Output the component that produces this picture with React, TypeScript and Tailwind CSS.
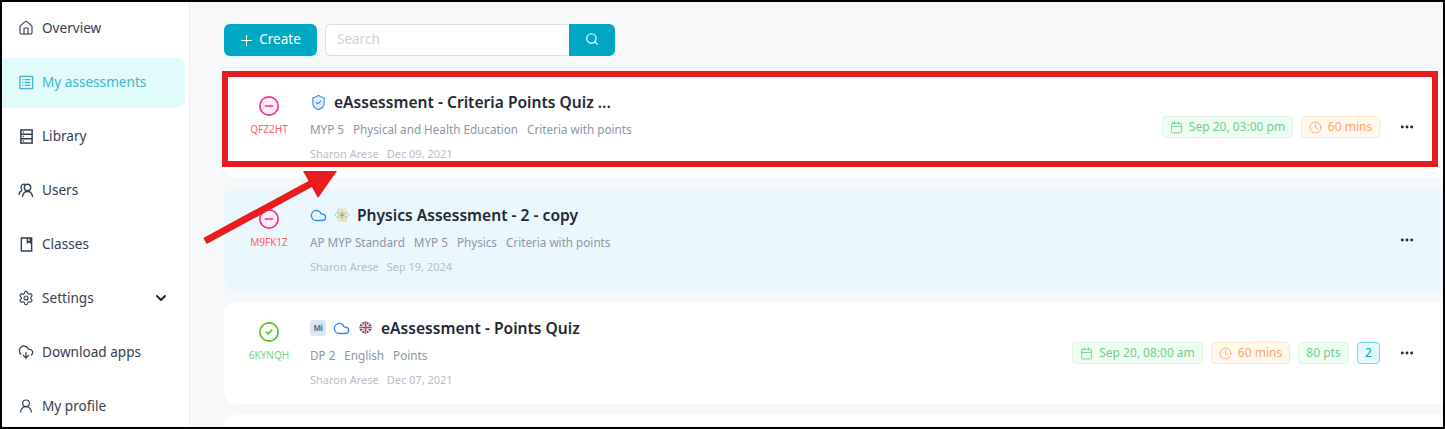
import { CloudDownload, Settings, UserRound, House, ChevronDown, Plus, Search, ShieldCheck, Cloud, Calendar, Clock, Ellipsis, CircleMinus, CircleCheck } from "lucide-react";

const AssessmentIcon = () => (
	<svg viewBox="0 0 16 16" className="h-[15px] w-[15px]" fill="none" stroke="currentColor" strokeWidth={1.4}>
		<rect x="1" y="1.5" width="13.5" height="13" />
		<path d="M3.5 5h1.2M6 5h6M3.5 8h1.2M6 8h6M3.5 11h1.2M6 11h6" />
	</svg>
);

const LibraryIcon = () => (
	<svg viewBox="0 0 16 16" className="h-[15px] w-[15px]" fill="none" stroke="currentColor" strokeWidth={1.6}>
		<rect x="2" y="1" width="12" height="14" />
		<path d="M2 5.7h12M2 10.3h12M4 3.4h1.2M4 8h1.2M4 12.7h1.2" />
	</svg>
);

const UsersIcon = () => (
	<svg viewBox="0 0 16 16" className="h-4 w-4" fill="none" stroke="currentColor" strokeWidth={1.4} strokeLinecap="round">
		<circle cx="9.5" cy="5.5" r="3.2" />
		<path d="M4.5 14.5c.4-3 2.4-5 5-5s4.6 2 5 5" />
		<path d="M6.5 2.2A3.2 3.2 0 0 0 3.8 7.6 M3.6 8.6C2.2 9.4 1.3 10.8 1 12.6" />
	</svg>
);

const ClassesIcon = () => (
	<svg viewBox="0 0 16 16" className="h-[15px] w-[15px]" fill="none" stroke="currentColor" strokeWidth={1.5}>
		<path d="M2.5 1h11v14h-11z" />
		<path d="M9 1v5l1.5-1 1.5 1V1" />
	</svg>
);

const AtomIcon = () => (
	<svg viewBox="0 0 16 16" className="h-4 w-4" fill="none" strokeWidth={0.8}>
		<ellipse cx="8" cy="8" rx="7" ry="3" stroke="#8fc7e8" />
		<ellipse cx="8" cy="8" rx="7" ry="3" stroke="#f0a58f" transform="rotate(60 8 8)" />
		<ellipse cx="8" cy="8" rx="7" ry="3" stroke="#e8cf7a" transform="rotate(120 8 8)" />
		<circle cx="8" cy="8" r="2" fill="#8cc63f" />
	</svg>
);

const FlagIcon = () => (
	<svg viewBox="0 0 14 14" className="ml-[2px] mr-[2px] h-[13px] w-[13px] -translate-y-px">
		<circle cx="7" cy="7" r="6.5" fill="#3f4f9a" />
		<path d="M2.5 2.5l9 9M11.5 2.5l-9 9" stroke="#f2f2f7" strokeWidth={1.6} />
		<path d="M7 .5v13M.5 7h13" stroke="#f2f2f7" strokeWidth={3} />
		<path d="M7 .5v13M.5 7h13" stroke="#d8344a" strokeWidth={1.6} />
	</svg>
);

const MiBadge = () => (
	<span className="flex h-4 w-4 items-center justify-center rounded-[3px] bg-[#dbe6f4] text-[8px] font-bold tracking-tighter text-[#5a6b80]">Mi</span>
);

const navItems = [
	{ label: "Overview", icon: <House className="h-4 w-4" strokeWidth={1.7} /> },
	{ label: "My assessments", icon: <AssessmentIcon />, active: true },
	{ label: "Library", icon: <LibraryIcon /> },
	{ label: "Users", icon: <UsersIcon /> },
	{ label: "Classes", icon: <ClassesIcon /> },
	{ label: "Settings", icon: <Settings className="h-4 w-4" strokeWidth={1.7} />, chevron: true },
	{ label: "Download apps", icon: <CloudDownload className="h-4 w-4" strokeWidth={1.9} /> },
	{ label: "My profile", icon: <UserRound className="h-4 w-4" strokeWidth={1.8} /> },
];

const cloud = <Cloud key="c" className="h-[17px] w-[17px] text-[#2f86f5]" strokeWidth={1.9} />;

const cards = [
	{
		done: false,
		code: "QFZ2HT",
		icons: [<ShieldCheck key="s" className="h-[17px] w-[17px] fill-[#e3effd] text-[#3d8bf2]" strokeWidth={1.6} />],
		title: "eAssessment - Criteria Points Quiz ...",
		meta: ["MYP 5", "Physical and Health Education", "Criteria with points"],
		date: "Dec 09, 2021",
		when: "Sep 20, 03:00 pm",
		mins: "60 mins",
	},
	{
		done: false,
		tinted: true,
		code: "M9FK1Z",
		icons: [cloud, <AtomIcon key="a" />],
		title: "Physics Assessment - 2 - copy",
		meta: ["AP MYP Standard", "MYP 5", "Physics", "Criteria with points"],
		date: "Sep 19, 2024",
	},
	{
		done: true,
		code: "6KYNQH",
		icons: [<MiBadge key="m" />, cloud, <FlagIcon key="f" />],
		title: "eAssessment - Points Quiz",
		meta: ["DP 2", "English", "Points"],
		date: "Dec 07, 2021",
		when: "Sep 20, 08:00 am",
		mins: "60 mins",
		pts: "80 pts",
		count: "2",
	},
];

function Card({ card }: { card: (typeof cards)[number] }) {
	return (
		<div className={`flex h-[102px] items-center rounded-l-xl pr-[28px] ${card.tinted ? "bg-[#eaf7fd]" : "bg-white"}`}>
			<div className="flex w-[90px] shrink-0 flex-col items-center gap-[4px] self-start pt-[19px]">
				{card.done ? (
					<CircleCheck className="h-[22px] w-[22px] text-[#52c41a]" strokeWidth={1.8} />
				) : (
					<CircleMinus className="h-[22px] w-[22px] fill-[#fdeef6] text-[#eb2f96]" strokeWidth={1.8} />
				)}
				<span className={`text-[10px] leading-[16px] ${card.done ? "text-[#73d48c]" : "text-[#ff5b6b]"}`}>{card.code}</span>
			</div>
			<div className="-ml-[4px] min-w-0 flex-1 self-start pt-[17px]">
				<div className="flex h-[20px] items-center gap-[7px]">
					<div className="flex -translate-y-px items-center gap-[7px]">{card.icons}</div>
					<span className="text-[15.6px] font-semibold text-[#1f2933]">{card.title}</span>
				</div>
				<div className="mt-[9px] flex h-[16px] items-center gap-[9px] text-[11.7px] text-[#8d96a3]">
					{card.meta.map((m) => (
						<span key={m}>{m}</span>
					))}
				</div>
				<div className="mt-[8px] flex h-[16px] items-center gap-2 text-[11px] text-[#b9bdc4]">
					<span>Sharon Arese</span>
					<span>{card.date}</span>
				</div>
			</div>
			<div className="flex items-center gap-2">
				{card.when && (
					<span className="flex h-[22px] w-[131px] items-center justify-center gap-[6px] rounded border border-[#d9f7e0] bg-[#f0fdf3] text-[12px] text-[#6fd08c]">
						<Calendar className="h-[13px] w-[13px]" strokeWidth={1.7} />
						{card.when}
					</span>
				)}
				{card.mins && (
					<span className="flex h-[22px] w-[79px] items-center justify-center gap-[6px] rounded border border-[#ffe6c7] bg-[#fff8ee] text-[12px] text-[#ffa768]">
						<Clock className="h-[13px] w-[13px]" strokeWidth={1.7} />
						{card.mins}
					</span>
				)}
				{card.pts && (
					<span className="flex h-[22px] w-[51px] items-center justify-center rounded border border-[#d9f7e0] bg-[#f0fdf3] text-[12px] text-[#6fd08c]">{card.pts}</span>
				)}
				{card.count && (
					<span className="flex h-[22px] w-[23px] items-center justify-center rounded border border-[#6fdbe8] bg-[#e3fafc] text-[12px] text-[#0f9fc0]">{card.count}</span>
				)}
			</div>
			<Ellipsis className="ml-[19px] h-4 w-4 text-[#1f2933]" strokeWidth={2.4} />
		</div>
	);
}

export default function App() {
	return (
		<div className="relative flex h-[429px] w-[1445px] overflow-hidden border-2 border-black bg-[#f6f8fa] font-['Noto_Sans',sans-serif]">
			{/* Sidebar */}
			<aside className="flex w-[188px] shrink-0 flex-col gap-1 border-r border-[#eceef1] bg-white pt-[2px]">
				{navItems.map((item) => (
					<div
						key={item.label}
						className={`mr-[4px] flex h-[50px] shrink-0 items-center gap-[8px] rounded-r-lg pb-[2px] pl-[16px] pr-[16px] text-[13.6px] ${item.active ? "bg-[#e1fbfb] text-[#3eb6cf]" : "text-[#33404f]"}`}
					>
						<span className="flex w-4 justify-center">{item.icon}</span>
						<span className="flex-1">{item.label}</span>
						{item.chevron && <ChevronDown className="h-4 w-4 text-[#1f2933]" strokeWidth={3} />}
					</div>
				))}
			</aside>

			{/* Main */}
			<main className="min-w-0 flex-1 pl-[34px] pt-[22px]">
				<div className="flex items-center">
					<button className="flex h-[32px] w-[93px] items-center justify-center gap-[4px] rounded-md bg-[#00a7c2] pb-[2px] pr-[2px] text-[13.5px] text-white shadow-[0_2px_0_#e1f7fa]">
						<Plus className="mt-[2px] h-[17px] w-[17px]" strokeWidth={1.6} />
						Create
					</button>
					<div className="ml-2 flex h-[32px] w-[244px] items-center rounded-l-md border border-r-0 border-[#d9dde1] bg-white pb-[2px] pl-[11px] text-[13.5px] text-[#d0d3d8]">
						Search
					</div>
					<button className="flex h-[32px] w-[46px] items-center justify-center rounded-r-md bg-[#00a7c2] pb-[2px] text-white">
						<Search className="h-[14px] w-[14px]" strokeWidth={2} />
					</button>
				</div>
				<div className="mt-[20px] flex flex-col gap-[11px]">
					{cards.map((c) => (
						<Card key={c.code} card={c} />
					))}
					<div className="h-[102px] rounded-l-xl bg-white" />
				</div>
			</main>

			{/* Red annotation over the first row */}
			<div className="absolute left-[220px] top-[69px] h-[96px] w-[1216px] border-[6px] border-[#e81c1c]" />
			<svg className="absolute left-[196px] top-[163px]" width="145" height="80" viewBox="198 165 145 80">
				<path d="M205 241 L312 183" stroke="#e81c1c" strokeWidth={7} />
				<path d="M303 171 L337 171 L318 198 Z" fill="#e81c1c" />
			</svg>
		</div>
	);
}
